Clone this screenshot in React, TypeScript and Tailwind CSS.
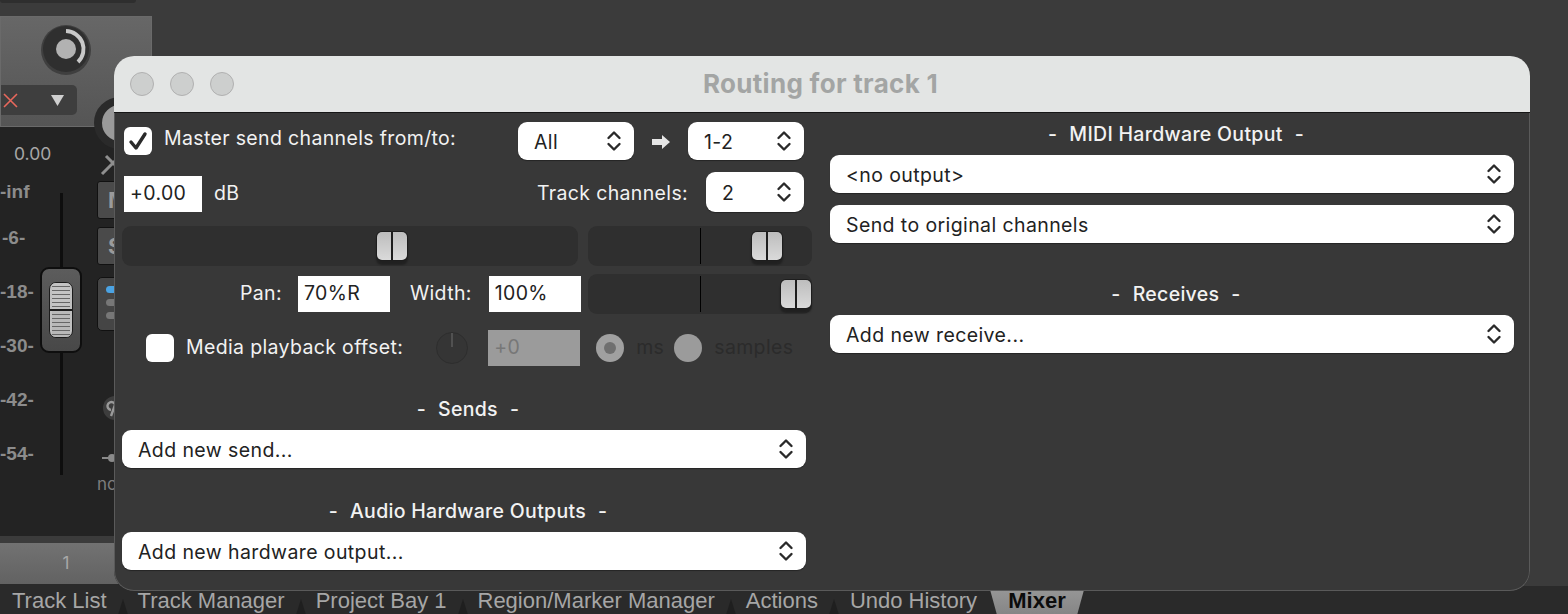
import React from "react";

const Chevrons = () => (
  <svg width="16" height="24" viewBox="0 0 16 24" fill="none" stroke="#2a2a2a" strokeWidth="2.4" strokeLinecap="round" strokeLinejoin="round" className="shrink-0">
    <path d="M2.5 9 L8 3.5 L13.5 9" />
    <path d="M2.5 15 L8 20.5 L13.5 15" />
  </svg>
);

const Select = ({ label, className, px = "pl-4 pr-3" }: { label: string; className: string; px?: string }) => (
  <div className={`flex items-center justify-between bg-white rounded-[9px] text-[#222] text-[19.5px] tracking-[0.4px] shadow-[0_1px_1px_rgba(0,0,0,0.35)] ${px} ${className}`}>
    <span className="pt-[3px]">{label}</span>
    <Chevrons />
  </div>
);

const Handle = () => (
  <div className="flex h-[30px] w-[32px] gap-[2px] rounded-[6px] bg-[#1d1d1d] p-[1px] shadow-[0_4px_2px_rgba(0,0,0,0.3)]">
    <div className="flex-1 rounded-l-[5px] bg-gradient-to-b from-[#bdbdbd] to-[#dadada]" />
    <div className="flex-1 rounded-r-[5px] bg-gradient-to-b from-[#bdbdbd] to-[#dadada]" />
  </div>
);

const Heading = ({ text, className }: { text: string; className: string }) => (
  <div className={`flex justify-center gap-[12px] text-[#f2f2f2] text-[19.5px] leading-[24px] tracking-[0.3px] font-medium ${className}`}>
    <span>-</span>
    <span>{text}</span>
    <span>-</span>
  </div>
);

const Box = ({ text, className }: { text: string; className: string }) => (
  <div className={`flex shrink-0 items-center bg-white text-[#222] text-[19.5px] tracking-[0.35px] pl-[6px] ${className}`}>{text}</div>
);

const Label = ({ text, className = "" }: { text: string; className?: string }) => (
  <span className={`shrink-0 text-[19.5px] tracking-[0.35px] text-[#f2f2f2] ${className}`}>{text}</span>
);

const Notch = ({ className }: { className: string }) => (
  <svg width="14" height="28" viewBox="0 0 14 28" className={`shrink-0 ${className}`}>
    <path d="M7 12 L2 28 L12 28 Z" fill="#1f1f1f" />
  </svg>
);

export default function App() {
  return (
    <div className="relative h-[614px] w-[1568px] overflow-hidden bg-[#3b3b3b] font-['Inter','Liberation_Sans',sans-serif]">
      <div className="flex h-[586px] flex-col">
        <div className="flex h-[543px]">
          {/* mixer strip */}
          <div className="relative h-full w-[152px] overflow-hidden">
            <div className="h-[3px] w-[136px] rounded-b-[4px] bg-[#2e2e2e]" />
            <div className="mt-[13px] h-[111px] w-[152px] border border-[#6a6a6a] bg-gradient-to-b from-[#676767] to-[#555555]">
              <svg width="52" height="52" viewBox="0 0 52 52" className="ml-[39px] mt-[7px]">
                <circle cx="26" cy="26" r="25" fill="#3f3f3f" />
                <circle cx="26" cy="25" r="23" fill="#2f2f2f" />
                <path d="M26 7 A18 18 0 0 1 38 38" fill="none" stroke="#c8c8c8" strokeWidth="4" />
                <circle cx="26" cy="25" r="10" fill="#b2b2b2" />
              </svg>
              <div className="mt-[9px] flex h-[30px] w-[76px] items-center justify-between rounded-r-[5px] bg-[#3e3e3e] pl-[2px] pr-[13px]">
                <svg width="15" height="15" viewBox="0 0 15 15" stroke="#e8685c" strokeWidth="1.6" fill="none">
                  <path d="M1 1 L14 14 M14 1 L1 14" />
                </svg>
                <svg width="13" height="11" viewBox="0 0 13 11"><path d="M0 0 H13 L6.5 11 Z" fill="#cfcfcf" /></svg>
              </div>
            </div>
            <div className="h-[409px] bg-[#232323] text-[#8c8c8c]">
              <div className="pt-[16px] pl-[14px] text-[17.5px] leading-[22px] text-[#a8a8a8]">0.00</div>
              <div className="mt-[28px] flex">
                <div className="-mt-[12px] flex w-[34px] flex-col gap-[32px] font-['Liberation_Sans',sans-serif] text-[19px] font-bold leading-[22px]">
                  <span className="-mb-[8px] whitespace-nowrap">-inf</span>
                  <span className="pl-[2px]">-6-</span>
                  <span className="whitespace-nowrap">-18-</span>
                  <span className="whitespace-nowrap">-30-</span>
                  <span className="whitespace-nowrap">-42-</span>
                  <span className="whitespace-nowrap">-54-</span>
                </div>
                <div className="relative ml-[26px] h-[282px] w-[3px] bg-[#0e0e0e]">
                  <div className="absolute -left-[20px] top-[74px] flex h-[86px] w-[42px] items-center justify-center rounded-[9px] border-2 border-[#0e0e0e] bg-gradient-to-b from-[#5c5c5c] to-[#484848]">
                    <div className="flex h-[56px] w-[24px] flex-col overflow-hidden rounded-[7px] border border-[#1c1c1c] bg-[#c0c0c0]">
                      <div className="mx-[2px] flex-1 bg-[repeating-linear-gradient(to_bottom,#c4c4c4_0px,#c4c4c4_3px,#666_3px,#666_4px)]" />
                      <div className="h-[2px] bg-[#1c1c1c]" />
                      <div className="mx-[2px] flex-1 bg-[repeating-linear-gradient(to_bottom,#b8b8b8_0px,#b8b8b8_3px,#666_3px,#666_4px)]" />
                    </div>
                  </div>
                </div>
                <div className="-mt-[12px] ml-[34px] flex flex-col gap-[8px]">
                  <div className="flex h-[38px] w-[30px] items-center rounded-[3px] border border-[#111] bg-[#4a4a4a] pl-[10px] text-[22px] font-bold text-[#9a9a9a]">M</div>
                  <div className="flex h-[38px] w-[30px] items-center rounded-[3px] border border-[#111] bg-[#4a4a4a] pl-[10px] text-[22px] font-bold text-[#9a9a9a]">S</div>
                  <div className="mt-[4px] flex h-[54px] w-[30px] flex-col gap-[6px] rounded-[5px] border border-[#111] bg-[#454545] pl-[8px] pt-[8px]">
                    <div className="h-[7px] w-[12px] rounded-full bg-[#4ba3e3]" />
                    <div className="h-[7px] w-[12px] rounded-full bg-[#777]" />
                    <div className="h-[7px] w-[12px] rounded-full bg-[#777]" />
                  </div>
                </div>
              </div>
            </div>
            <div className="absolute left-[94px] top-[97px] h-[52px] w-[52px] rounded-full border-[8px] border-[#2a2a2a] bg-[#9a9a9a]" />
            <svg width="24" height="24" viewBox="0 0 24 24" className="absolute left-[98px] top-[152px]" stroke="#8f8f8f" strokeWidth="3">
              <path d="M4 22 L18 8 M8 4 L18 14" />
            </svg>
            <div className="absolute left-[103px] top-[396px] h-[24px] w-[24px] rounded-full bg-[#3d3d3d]" />
            <svg width="12" height="18" viewBox="0 0 12 18" className="absolute left-[106px] top-[399px]" fill="none" stroke="#9a9a9a" strokeWidth="2.4">
              <path d="M9 9 A4 4 0 1 0 5 11 M9 6 L5 17" />
            </svg>
            <div className="absolute left-[102px] top-[457px] h-[2px] w-[10px] bg-[#8a8a8a]" />
            <div className="absolute left-[108px] top-[454px] h-[8px] w-[8px] rounded-full bg-[#8a8a8a]" />
            <div className="absolute left-[97px] top-[474px] text-[17px] leading-[20px] text-[#7d7d7d]">no</div>
          </div>
        </div>
        <div className="flex h-[43px] w-[152px] items-center justify-center border-b-2 border-[#2a2a2a] bg-gradient-to-b from-[#727272] to-[#626262] pr-[20px] text-[17px] text-[#a8a8a8]">
          1
        </div>
      </div>

      {/* dock tabs */}
      <div className="relative flex h-[28px] items-center bg-[#2a2a2a] pl-[12px] pt-[2px] font-['Liberation_Sans',sans-serif] text-[22px] leading-[26px] text-[#a6a6a6]">
        <span className="whitespace-nowrap">Track List</span>
        <Notch className="ml-[9px] mr-[8px]" />
        <span className="whitespace-nowrap">Track Manager</span>
        <Notch className="ml-[9px] mr-[8px]" />
        <span className="whitespace-nowrap">Project Bay 1</span>
        <Notch className="ml-[9px] mr-[8px]" />
        <span className="whitespace-nowrap">Region/Marker Manager</span>
        <Notch className="ml-[9px] mr-[8px]" />
        <span className="whitespace-nowrap">Actions</span>
        <Notch className="ml-[9px] mr-[9px]" />
        <span className="whitespace-nowrap">Undo History</span>
        <div className="-mt-[2px] ml-[12px] flex h-[28px] w-[96px] shrink-0 items-center justify-center bg-gradient-to-b from-[#989898] to-[#868686] pt-[2px] font-bold text-[#0c0c0c] [clip-path:polygon(0_0,100%_0,92%_100%,8%_100%)]">Mixer</div>
      </div>

      {/* routing window */}
      <div className="absolute left-[114px] top-[56px] flex h-[535px] w-[1416px] flex-col overflow-hidden rounded-[20px] bg-[#383838]">
        <div className="relative flex h-[57px] shrink-0 items-center border-b border-[#161616] bg-[#e3e5e4] pl-[16px]">
          <div className="flex gap-[16px]">
            <div className="h-[24px] w-[24px] rounded-full border border-[#b0b0b0] bg-[#cdcfce]" />
            <div className="h-[24px] w-[24px] rounded-full border border-[#b0b0b0] bg-[#cdcfce]" />
            <div className="h-[24px] w-[24px] rounded-full border border-[#b0b0b0] bg-[#cdcfce]" />
          </div>
          <div className="absolute inset-x-0 top-0 flex h-[54px] items-center justify-center pr-[3px] text-[26px] font-bold tracking-[0.3px] text-[#a3a5a4]">Routing for track 1</div>
        </div>
        <div className="flex flex-1 gap-[24px] rounded-b-[20px] border border-t-0 border-[#5a5a5a] pl-[7px] pt-[9px]">
          {/* left column */}
          <div className="flex w-[684px] flex-col">
            <div className="flex h-[38px] items-center">
              <div className="ml-[2px] flex h-[28px] w-[28px] items-center justify-center rounded-[6px] bg-white">
                <svg width="20" height="20" viewBox="0 0 20 20" fill="none" stroke="#2a2a2a" strokeWidth="3.4" strokeLinecap="round" strokeLinejoin="round">
                  <path d="M3 11 L8 17 L17 3" />
                </svg>
              </div>
              <Label text="Master send channels from/to:" className="mb-[4px] ml-[12px]" />
              <Select label="All" className="ml-auto mr-[18px] h-[38px] w-[116px]" />
              <svg width="18" height="14" viewBox="0 0 18 14" className="mt-[2px]">
                <path d="M0 4 H10 V0 L18 7 L10 14 V10 H0 Z" fill="#e6e6e6" />
              </svg>
              <Select label="1-2" className="ml-[18px] mr-[2px] h-[38px] w-[116px]" />
            </div>
            <div className="mt-[12px] flex h-[40px] items-center">
              <Box text="+0.00" className="ml-[2px] mt-[4px] h-[36px] w-[78px]" />
              <Label text="dB" className="ml-[12px] mt-[3px]" />
              <Label text="Track channels:" className="ml-auto mt-[3px]" />
              <Select label="2" className="ml-[18px] mr-[2px] h-[40px] w-[98px]" />
            </div>
            <div className="mt-[14px] flex h-[88px] w-[690px] gap-[10px]">
              <div className="flex w-[456px] flex-col">
                <div className="flex h-[40px] items-center rounded-[9px] bg-[#2f2f2f] pl-[254px]">
                  <Handle />
                </div>
                <div className="mt-[10px] flex h-[36px] items-center">
                  <Label text="Pan:" className="ml-[118px]" />
                  <Box text="70%R" className="ml-[16px] h-[36px] w-[92px]" />
                  <Label text="Width:" className="ml-[20px]" />
                  <Box text="100%" className="ml-[17px] h-[36px] w-[92px]" />
                </div>
              </div>
              <div className="flex w-[224px] flex-col gap-[8px]">
                <div className="relative flex h-[40px] items-center rounded-[9px] bg-[#2f2f2f] pl-[163px]">
                  <div className="absolute left-[112px] top-[2px] h-[36px] w-[1px] bg-black" />
                  <Handle />
                </div>
                <div className="relative flex h-[40px] items-center rounded-[9px] bg-[#2f2f2f] pl-[192px]">
                  <div className="absolute left-[112px] top-[2px] h-[36px] w-[1px] bg-black" />
                  <Handle />
                </div>
              </div>
            </div>
            <div className="mt-[16px] flex h-[36px] items-center">
              <div className="ml-[24px] h-[28px] w-[28px] rounded-[6px] bg-white" />
              <Label text="Media playback offset:" className="ml-[12px]" />
              <svg width="32" height="32" viewBox="0 0 32 32" className="ml-[33px] shrink-0">
                <circle cx="16" cy="16" r="15.5" fill="#353535" stroke="#2e2e2e" />
                <path d="M16 1 V15" stroke="#6e6e6e" />
              </svg>
              <div className="ml-[20px] flex h-[36px] w-[92px] shrink-0 items-center bg-[#9b9b9b] pl-[6px] text-[19.5px] tracking-[0.35px] text-[#777]">+0</div>
              <div className="ml-[16px] flex h-[28px] w-[28px] shrink-0 items-center justify-center rounded-full bg-[#a0a0a0]">
                <div className="h-[12px] w-[12px] rounded-full bg-[#6f6f6f]" />
              </div>
              <span className="ml-[12px] text-[19.5px] tracking-[0.35px] text-[#2b2b2b]">ms</span>
              <div className="ml-[10px] h-[28px] w-[28px] shrink-0 rounded-full bg-[#9b9b9b]" />
              <span className="ml-[12px] text-[19.5px] tracking-[0.35px] text-[#2b2b2b]">samples</span>
            </div>
            <Heading text="Sends" className="mt-[31px] pl-[8px]" />
            <Select label="Add new send..." className="mt-[9px] h-[38px]" />
            <Heading text="Audio Hardware Outputs" className="mt-[31px] pl-[8px]" />
            <Select label="Add new hardware output..." className="mt-[9px] h-[38px]" />
          </div>
          {/* right column */}
          <div className="flex w-[684px] flex-col">
            <Heading text="MIDI Hardware Output" className="pl-[8px]" />
            <Select label="<no output>" className="mt-[9px] h-[38px]" />
            <Select label="Send to original channels" className="mt-[12px] h-[38px]" />
            <Heading text="Receives" className="mt-[39px] pl-[8px]" />
            <Select label="Add new receive..." className="mt-[9px] h-[38px]" />
          </div>
        </div>
      </div>
    </div>
  );
}
